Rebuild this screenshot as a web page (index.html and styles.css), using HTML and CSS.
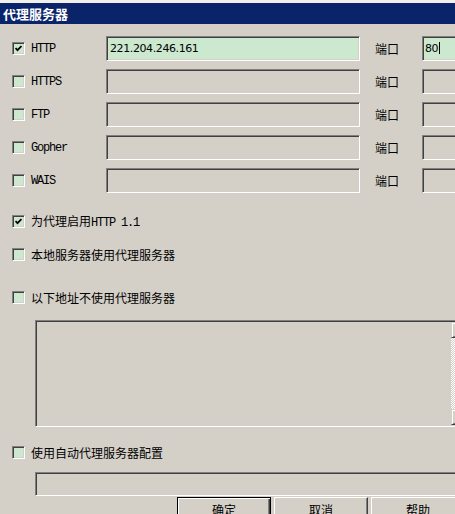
FILE: index.html
```html
<!DOCTYPE html>
<html>
<head>
    <title>代理服务器</title>
    <meta charset="utf-8">
    <link rel="stylesheet" href="styles.css">
</head>

<body>
    <div class="titlebar">代理服务器</div>

    <div class="servers">
        <div class="server-row">
            <span class="check checked"><svg width="7" height="7" viewBox="0 0 7 7"><path d="M0.5 3 L2.5 5.2 L6.5 1" /></svg></span>
            <span class="proto">HTTP</span>
            <div class="field active">221.204.246.161</div>
            <span class="port-label">端口</span>
            <div class="field port active">80<span class="caret"></span></div>
        </div>
        <div class="server-row">
            <span class="check"></span>
            <span class="proto">HTTPS</span>
            <div class="field"></div>
            <span class="port-label">端口</span>
            <div class="field port"></div>
        </div>
        <div class="server-row">
            <span class="check"></span>
            <span class="proto">FTP</span>
            <div class="field"></div>
            <span class="port-label">端口</span>
            <div class="field port"></div>
        </div>
        <div class="server-row">
            <span class="check"></span>
            <span class="proto">Gopher</span>
            <div class="field"></div>
            <span class="port-label">端口</span>
            <div class="field port"></div>
        </div>
        <div class="server-row">
            <span class="check"></span>
            <span class="proto">WAIS</span>
            <div class="field"></div>
            <span class="port-label">端口</span>
            <div class="field port"></div>
        </div>
    </div>

    <div class="option opt-http11">
        <span class="check checked"><svg width="7" height="7" viewBox="0 0 7 7"><path d="M0.5 3 L2.5 5.2 L6.5 1" /></svg></span>
        <span>为代理启用<span class="en">HTTP 1.1</span></span>
    </div>
    <div class="option opt-local">
        <span class="check"></span>
        <span>本地服务器使用代理服务器</span>
    </div>
    <div class="option opt-bypass">
        <span class="check"></span>
        <span>以下地址不使用代理服务器</span>
    </div>

    <div class="field bypass">
        <div class="bypass-text"></div>
        <div class="scrollbar">
            <span class="scroll-btn"></span>
            <span class="scroll-track"></span>
            <span class="scroll-btn"></span>
        </div>
    </div>

    <div class="option opt-auto">
        <span class="check"></span>
        <span>使用自动代理服务器配置</span>
    </div>
    <div class="field auto-url"></div>

    <div class="buttons">
        <div class="btn default">确定</div>
        <div class="btn">取消</div>
        <div class="btn">帮助</div>
    </div>
</body>

</html>
```

FILE: styles.css
```css
body {
    margin: 0;
    width: 455px;
    height: 514px;
    overflow: hidden;
    box-sizing: border-box;
    border-top: 3px solid #f1f0eb;
    background-color: #d4d0c8;
    font-family: "Noto Sans CJK SC", sans-serif;
    font-size: 12px;
    color: #000;
}

.titlebar {
    height: 21px;
    line-height: 21px;
    padding-left: 3px;
    background-color: #0a246a;
    color: #fff;
    font-size: 13px;
    font-weight: bold;
}

.servers {
    margin-top: 12px;
    display: flex;
    flex-direction: column;
    gap: 8px;
}

.server-row {
    display: flex;
    align-items: center;
    height: 25px;
    padding-left: 12px;
}

.server-row > * {
    flex: none;
}

.check {
    flex: none;
    width: 13px;
    height: 13px;
    box-sizing: border-box;
    border: 1px solid;
    border-color: #808080 #fff #fff #808080;
    box-shadow: inset 1px 1px #404040, inset -1px -1px #d4d0c8;
    background-color: #cce8cf;
    display: flex;
    align-items: center;
    justify-content: center;
}

.check svg path {
    fill: none;
    stroke: #000;
    stroke-width: 1.8;
}

.proto,
.en {
    font-family: "Liberation Mono", monospace;
    font-size: 12px;
    letter-spacing: -1.2px;
}

.proto {
    width: 75px;
    margin-left: 6px;
}

.field {
    box-sizing: border-box;
    height: 25px;
    border: 1px solid;
    border-color: #808080 #fff #fff #808080;
    box-shadow: inset 1px 1px #404040, inset -1px -1px #d4d0c8;
    background-color: #d4d0c8;
    padding: 0 2px 1px 3px;
    display: flex;
    align-items: center;
    font-family: "DejaVu Sans", sans-serif;
    font-size: 11px;
    letter-spacing: -0.4px;
}

.field.active {
    background-color: #cce8cf;
}

.server-row .field {
    width: 254px;
}

.port-label {
    width: 47px;
    margin-left: 15px;
}

.server-row .field.port {
    width: 60px;
    padding-left: 2px;
}

.caret {
    display: inline-block;
    width: 1px;
    height: 12px;
    margin-left: 1px;
    background-color: #000;
}

.option {
    display: flex;
    align-items: center;
    gap: 6px;
    height: 20px;
    padding-left: 12px;
}

.opt-http11 {
    margin-top: 18px;
}

.opt-local {
    margin-top: 13px;
}

.opt-bypass {
    margin-top: 23px;
}

.opt-auto {
    margin-top: 15px;
}

.bypass {
    width: 434px;
    height: 107px;
    margin: 13px 0 0 35px;
    padding: 1px;
    align-items: stretch;
}

.bypass-text {
    flex: 1;
}

.scrollbar {
    width: 16px;
    display: flex;
    flex-direction: column;
}

.scroll-btn {
    height: 16px;
    box-sizing: border-box;
    border: 1px solid;
    border-color: #d4d0c8 #404040 #404040 #d4d0c8;
    box-shadow: inset 1px 1px #fff, inset -1px -1px #808080;
    background-color: #d4d0c8;
}

.scroll-track {
    flex: 1;
    background: repeating-conic-gradient(#fff 0 25%, #d4d0c8 0 50%) 0 0 / 2px 2px;
}

.auto-url {
    width: 430px;
    height: 24px;
    margin: 10px 0 0 35px;
}

.buttons {
    display: flex;
    gap: 3px;
    margin-top: 1px;
    padding-left: 177px;
}

.btn {
    flex: none;
    width: 94px;
    height: 23px;
    box-sizing: border-box;
    border: 1px solid;
    border-color: #fff #404040 #404040 #fff;
    box-shadow: inset -1px -1px #808080;
    background-color: #d4d0c8;
    display: flex;
    align-items: center;
    justify-content: center;
    padding-top: 2px;
}

.btn.default {
    border-color: #000;
    box-shadow: inset 1px 1px #fff, inset -1px -1px #404040, inset -2px -2px #808080;
}
```
